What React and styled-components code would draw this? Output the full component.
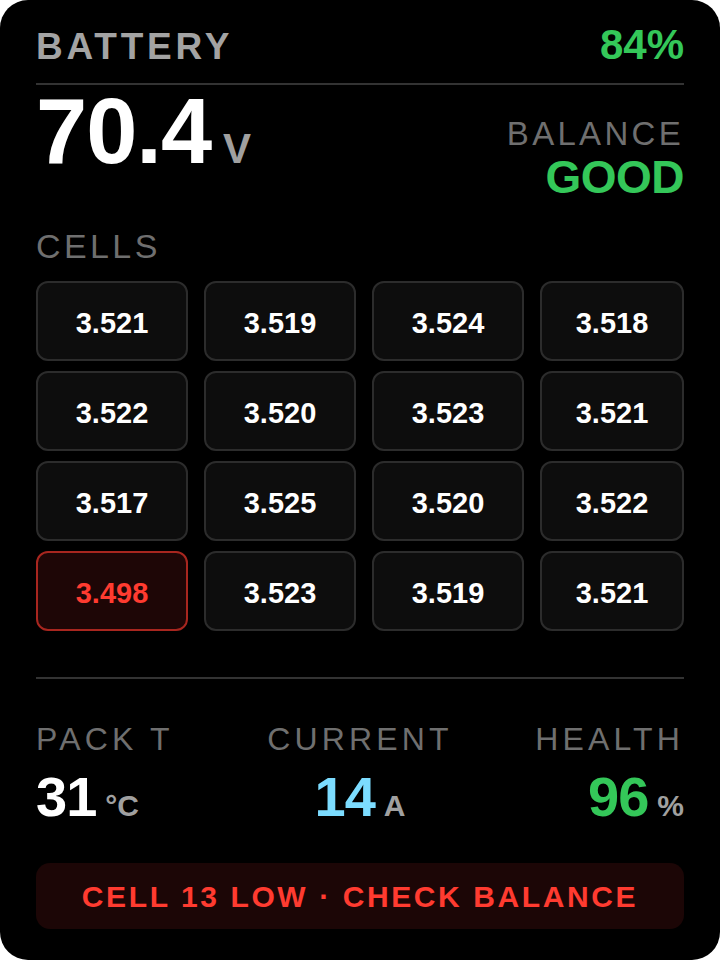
import React from "react";
import styled, { createGlobalStyle } from "styled-components";

const GlobalStyle = createGlobalStyle`
  html, body {
    margin: 0;
    padding: 0;
    background: #ffffff;
  }
  * { box-sizing: border-box; }
`;

const Card = styled.main`
  width: 720px;
  height: 960px;
  background: #000;
  border-radius: 28px;
  padding: 24px 36px 30px;
  display: flex;
  flex-direction: column;
  font-family: "Liberation Sans", Arial, sans-serif;
  overflow: hidden;
`;

const Header = styled.header`
  display: flex;
  justify-content: space-between;
  align-items: baseline;
  padding-bottom: 17px;
  border-bottom: 2px solid #333333;
`;

const Title = styled.h1`
  margin: 0;
  font-size: 37px;
  line-height: 1;
  font-weight: 700;
  letter-spacing: 3.8px;
  color: #a3a3a3;
`;

const Charge = styled.span`
  font-size: 42px;
  line-height: 1;
  font-weight: 700;
  color: #34c759;
`;

const MainRow = styled.section`
  display: flex;
  justify-content: space-between;
  align-items: flex-start;
`;

const Reading = styled.div`
  display: flex;
  align-items: baseline;
`;

const Value = styled.span`
  font-size: ${(p) => p.$size}px;
  line-height: 1;
  font-weight: 700;
  letter-spacing: ${(p) => p.$spacing || 0}px;
  color: ${(p) => p.$color || "#ffffff"};
`;

const Unit = styled.span`
  font-size: ${(p) => p.$size}px;
  line-height: 1;
  font-weight: 700;
  margin-left: ${(p) => p.$gap}px;
  color: #a0a0a0;
`;

const BalanceBlock = styled.div`
  padding-top: 32px;
  display: flex;
  flex-direction: column;
  align-items: flex-end;
  gap: 4px;
`;

const Label = styled.div`
  font-size: ${(p) => p.$size}px;
  line-height: 1;
  font-weight: 400;
  letter-spacing: ${(p) => p.$spacing || 0.1}em;
  color: #6f6f6f;
`;

const Status = styled.span`
  font-size: 46px;
  line-height: 1;
  font-weight: 700;
  letter-spacing: -0.5px;
  color: #34c759;
`;

const CellsSection = styled.section`
  margin-top: 29px;
  display: flex;
  flex-direction: column;
  gap: 18px;
`;

const CellGrid = styled.div`
  display: grid;
  grid-template-columns: repeat(3, 152px) minmax(0, 1fr);
  grid-auto-rows: 80px;
  column-gap: 16px;
  row-gap: 10px;
`;

const Cell = styled.div`
  display: flex;
  align-items: center;
  justify-content: center;
  padding-top: 4px;
  border-radius: 12px;
  border: 2px solid ${(p) => (p.$low ? "#a8261f" : "#2c2c2c")};
  background: ${(p) => (p.$low ? "#1e0606" : "#0d0d0d")};
  color: ${(p) => (p.$low ? "#ff3b30" : "#ffffff")};
  font-size: 29px;
  line-height: 1;
  font-weight: 700;
`;

const Rule = styled.hr`
  margin: 46px 0 0;
  border: 0;
  border-top: 2px solid #333333;
`;

const Stats = styled.section`
  margin-top: 44px;
  display: grid;
  grid-template-columns: repeat(3, 1fr);
`;

const Stat = styled.div`
  display: flex;
  flex-direction: column;
  align-items: ${(p) => p.$align};
  gap: 14px;
`;

const Alert = styled.div`
  margin-top: 38px;
  height: 66px;
  border-radius: 14px;
  background: #1c0606;
  display: flex;
  align-items: center;
  justify-content: center;
  padding-top: 2px;
  color: #ff3b30;
  font-size: 30px;
  line-height: 1;
  font-weight: 700;
  letter-spacing: 2.6px;
`;

const cells = [
  "3.521", "3.519", "3.524", "3.518",
  "3.522", "3.520", "3.523", "3.521",
  "3.517", "3.525", "3.520", "3.522",
  "3.498", "3.523", "3.519", "3.521",
];

const stats = [
  { label: "PACK T", value: "31", unit: "°C", color: "#ffffff", align: "flex-start" },
  { label: "CURRENT", value: "14", unit: "A", color: "#7cdcff", align: "center" },
  { label: "HEALTH", value: "96", unit: "%", color: "#34c759", align: "flex-end" },
];

export default function App() {
  return (
    <>
      <GlobalStyle />
      <Card>
        <Header>
          <Title>BATTERY</Title>
          <Charge>84%</Charge>
        </Header>

        <MainRow>
          <Reading>
            <Value $size={92} $spacing={-1}>70.4</Value>
            <Unit $size={42} $gap={12}>V</Unit>
          </Reading>
          <BalanceBlock>
            <Label $size={33}>BALANCE</Label>
            <Status>GOOD</Status>
          </BalanceBlock>
        </MainRow>

        <CellsSection>
          <Label $size={34}>CELLS</Label>
          <CellGrid>
            {cells.map((v, i) => (
              <Cell key={i} $low={parseFloat(v) < 3.5}>
                {v}
              </Cell>
            ))}
          </CellGrid>
        </CellsSection>

        <Rule />

        <Stats>
          {stats.map((s) => (
            <Stat key={s.label} $align={s.align}>
              <Label $size={32} $spacing={0.13}>{s.label}</Label>
              <Reading>
                <Value $size={56} $spacing={-1} $color={s.color}>
                  {s.value}
                </Value>
                <Unit $size={30} $gap={9}>{s.unit}</Unit>
              </Reading>
            </Stat>
          ))}
        </Stats>

        <Alert>CELL 13 LOW · CHECK BALANCE</Alert>
      </Card>
    </>
  );
}
